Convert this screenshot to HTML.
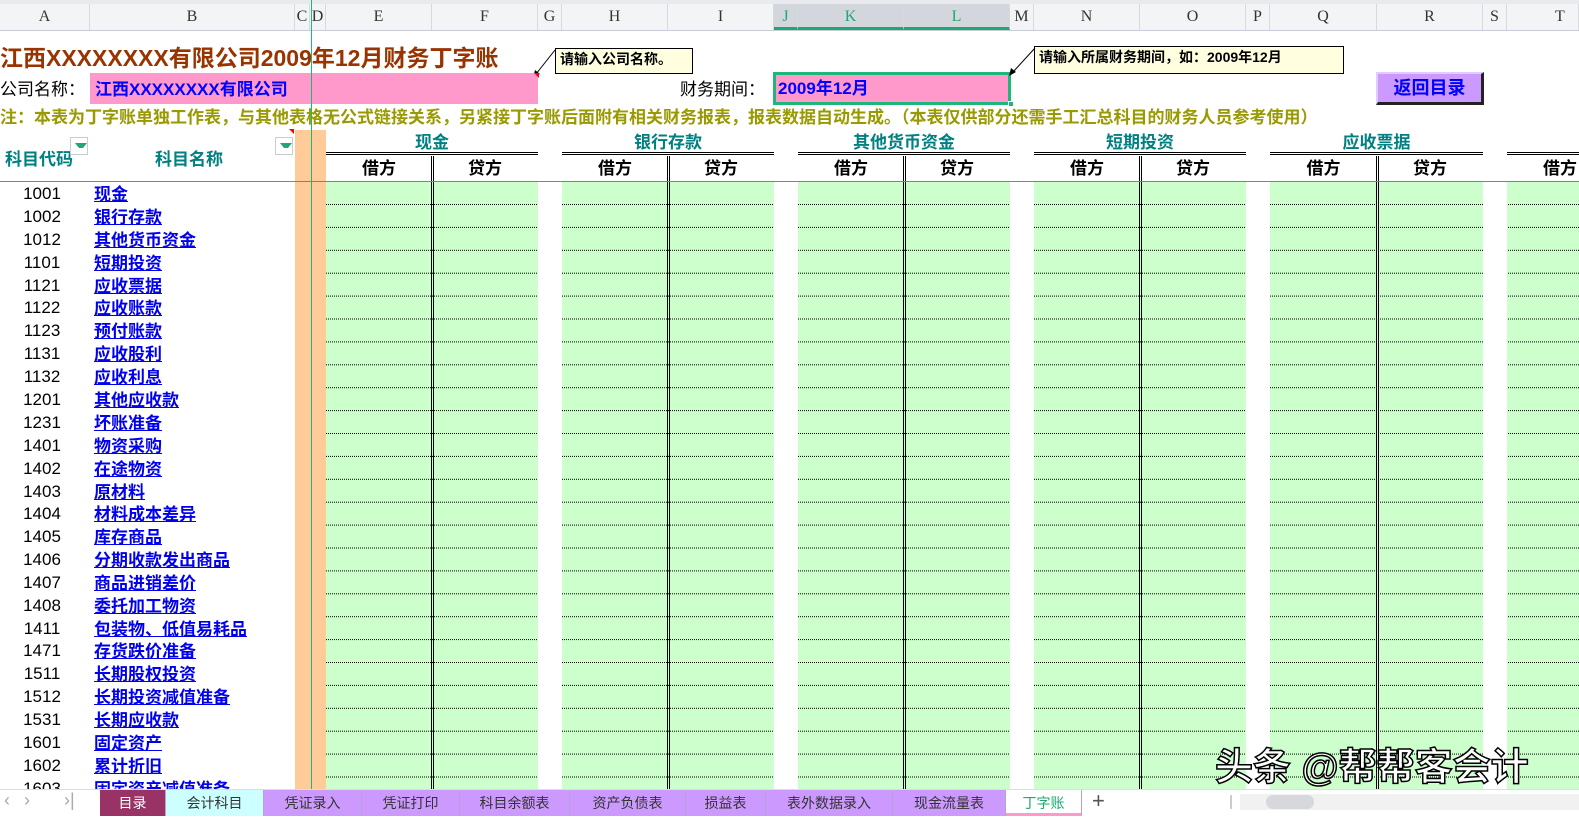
<!DOCTYPE html>
<html><head><meta charset="utf-8">
<style>
*{margin:0;padding:0;box-sizing:border-box}
body{width:1579px;height:821px;overflow:hidden;background:#fff;position:relative;font-family:"Liberation Sans","Noto Sans CJK SC",sans-serif}
.a{position:absolute}
.hdr{top:0;left:0;width:1579px;height:31px;background:#f3f4f6;border-bottom:1px solid #c8ccd4;border-top:4px solid #e8eaee}
.col{position:absolute;top:4px;height:26px;line-height:26px;text-align:center;font-family:"Liberation Serif",serif;font-size:16px;color:#333;border-right:1px solid #d6d9de}
.g{background:#ccffcc}
.zh{font-family:"Liberation Sans","Noto Sans CJK SC",sans-serif;font-weight:bold}
.grp{position:absolute;top:132px;height:23px;line-height:22px;text-align:center;color:#008080;font-size:17px;border-bottom:3px double #000}
.sub{position:absolute;top:157px;height:24px;line-height:24px;text-align:center;font-size:17px;color:#000}
.rows div{position:absolute;height:23px;line-height:23px;font-size:17px}
.code{left:0;width:84px;text-align:center;color:#000}
.nm{left:94px;color:#0000ee;text-decoration:underline;font-weight:bold}
.tab{position:absolute;top:790px;height:26px;line-height:26px;text-align:center;font-size:14px;color:#333;background:#cc99ff;border-right:1px solid #b9a0d8}
</style></head><body>
<div class="a hdr"></div>
<div class="col" style="left:0;width:90px">A</div>
<div class="col" style="left:90px;width:205px">B</div>
<div class="col" style="left:295px;width:15px">C</div>
<div class="col" style="left:310px;width:16px">D</div>
<div class="col" style="left:326px;width:106px">E</div>
<div class="col" style="left:432px;width:106px">F</div>
<div class="col" style="left:538px;width:24px">G</div>
<div class="col" style="left:562px;width:106px">H</div>
<div class="col" style="left:668px;width:106px">I</div>
<div class="col" style="left:774px;width:24px;background:#d3d6dc;color:#1fa872;border-bottom:3px solid #1fa872">J</div>
<div class="col" style="left:798px;width:106px;background:#d3d6dc;color:#1fa872;border-bottom:3px solid #1fa872">K</div>
<div class="col" style="left:904px;width:106px;background:#d3d6dc;color:#1fa872;border-bottom:3px solid #1fa872">L</div>
<div class="col" style="left:1010px;width:24px">M</div>
<div class="col" style="left:1034px;width:106px">N</div>
<div class="col" style="left:1140px;width:106px">O</div>
<div class="col" style="left:1246px;width:24px">P</div>
<div class="col" style="left:1270px;width:107px">Q</div>
<div class="col" style="left:1377px;width:106px">R</div>
<div class="col" style="left:1483px;width:24px">S</div>
<div class="col" style="left:1507px;width:72px;text-align:left;padding-left:48px">T</div>

<div class="a zh" style="left:0;top:39px;font-size:23px;color:#993300;white-space:nowrap">江西XXXXXXXX有限公司2009年12月财务丁字账</div>
<div class="a zh" style="left:555px;top:48px;width:138px;height:26px;background:#ffffe0;border:1px solid #000;font-size:14px;line-height:20px;padding-left:4px">请输入公司名称。</div>
<svg class="a" style="left:530px;top:48px" width="30" height="32"><line x1="25" y1="2" x2="6" y2="26" stroke="#000"/><polygon points="3,30 5,22 10,26" fill="#000"/></svg>

<div class="a" style="left:0;top:78px;font-size:17px;line-height:24px">公司名称：</div>
<div class="a zh" style="left:90px;top:73px;width:448px;height:31px;background:#ff99cc;color:#0000ff;font-size:17px;line-height:33px;padding-left:5px">江西XXXXXXXX有限公司</div>
<div class="a" style="left:534px;top:73px;width:0;height:0;border-left:5px solid transparent;border-top:5px solid red"></div>
<div class="a" style="left:680px;top:78px;font-size:17px;line-height:24px">财务期间：</div>
<div class="a zh" style="left:773px;top:72px;width:238px;height:33px;background:#ff99cc;border:3px solid #1fb67a;color:#0000ff;font-size:17px;line-height:28px;padding-left:2px">2009年12月</div>
<div class="a" style="left:1008px;top:101px;width:6px;height:6px;background:#1fb67a;border:1px solid #fff"></div>
<div class="a zh" style="left:1034px;top:46px;width:310px;height:28px;background:#ffffe0;border:1px solid #000;font-size:14px;line-height:20px;padding-left:4px">请输入所属财务期间，如：2009年12月</div>
<svg class="a" style="left:1005px;top:46px" width="32" height="32"><line x1="30" y1="2" x2="8" y2="26" stroke="#000"/><polygon points="4,30 6,22 11,26" fill="#000"/></svg>
<div class="a zh" style="left:1376px;top:72px;width:108px;height:33px;background:#cc99ff;border-top:2px solid #e0ccff;border-left:2px solid #e0ccff;border-right:3px solid #222;border-bottom:3px solid #222;color:#0000ff;font-size:18px;text-align:center;line-height:29px">返回目录</div>

<div class="a zh" style="left:0;top:106px;font-size:17px;color:#999900;white-space:nowrap;line-height:24px">注：本表为丁字账单独工作表，与其他表格无公式链接关系，另紧接丁字账后面附有相关财务报表，报表数据自动生成。（本表仅供部分还需手工汇总科目的财务人员参考使用）</div>

<div class="a zh" style="left:5px;top:145px;font-size:17px;color:#008080">科目代码</div>
<div class="a zh" style="left:155px;top:145px;font-size:17px;color:#008080">科目名称</div>
<div class="a" style="left:70px;top:137px;width:18px;height:18px;border:1px solid #ccc;background:#fff"><div style="margin:5px 0 0 4px;border-left:4px solid transparent;border-right:4px solid transparent;border-top:5px solid #1fa872"></div></div>
<div class="a" style="left:275px;top:137px;width:18px;height:18px;border:1px solid #ccc;background:#fff"><div style="margin:5px 0 0 4px;border-left:4px solid transparent;border-right:4px solid transparent;border-top:5px solid #1fa872"></div></div>
<div class="a" style="left:289px;top:129px;border-left:5px solid transparent;border-top:5px solid red"></div>

<div class="a" style="left:295px;top:130px;width:31px;height:660px;background:#ffcc99"></div>

<div class="grp zh" style="left:326px;width:212px">现金</div>
<div class="grp zh" style="left:562px;width:212px">银行存款</div>
<div class="grp zh" style="left:798px;width:212px">其他货币资金</div>
<div class="grp zh" style="left:1034px;width:212px">短期投资</div>
<div class="grp zh" style="left:1270px;width:213px">应收票据</div>
<div class="grp zh" style="left:1507px;width:80px"></div>

<div class="sub zh" style="left:326px;width:106px">借方</div><div class="sub zh" style="left:432px;width:106px">贷方</div>
<div class="sub zh" style="left:562px;width:106px">借方</div><div class="sub zh" style="left:668px;width:106px">贷方</div>
<div class="sub zh" style="left:798px;width:106px">借方</div><div class="sub zh" style="left:904px;width:106px">贷方</div>
<div class="sub zh" style="left:1034px;width:106px">借方</div><div class="sub zh" style="left:1140px;width:106px">贷方</div>
<div class="sub zh" style="left:1270px;width:107px">借方</div><div class="sub zh" style="left:1377px;width:106px">贷方</div>
<div class="sub zh" style="left:1507px;width:106px;text-align:left;padding-left:36px">借方</div>

<div class="a g" style="left:326px;top:182px;width:212px;height:608px"></div>
<div class="a g" style="left:562px;top:182px;width:212px;height:608px"></div>
<div class="a g" style="left:798px;top:182px;width:212px;height:608px"></div>
<div class="a g" style="left:1034px;top:182px;width:212px;height:608px"></div>
<div class="a g" style="left:1270px;top:182px;width:213px;height:608px"></div>
<div class="a g" style="left:1507px;top:182px;width:72px;height:608px"></div>
<svg class="a" style="left:0;top:0" width="1579" height="790">
<defs><pattern id="p" x="0" y="204" width="1579" height="22.9" patternUnits="userSpaceOnUse"><line x1="0" y1="0.5" x2="1579" y2="0.5" stroke="#000" stroke-dasharray="1,1"/></pattern></defs>
<rect x="326" y="200" width="212" height="590" fill="url(#p)"/>
<rect x="562" y="200" width="212" height="590" fill="url(#p)"/>
<rect x="798" y="200" width="212" height="590" fill="url(#p)"/>
<rect x="1034" y="200" width="212" height="590" fill="url(#p)"/>
<rect x="1270" y="200" width="213" height="590" fill="url(#p)"/>
<rect x="1507" y="200" width="72" height="590" fill="url(#p)"/>
<g stroke="#000" stroke-width="1">
<line x1="431.5" y1="156" x2="431.5" y2="790"/><line x1="433.5" y1="156" x2="433.5" y2="790"/>
<line x1="667.5" y1="156" x2="667.5" y2="790"/><line x1="669.5" y1="156" x2="669.5" y2="790"/>
<line x1="903.5" y1="156" x2="903.5" y2="790"/><line x1="905.5" y1="156" x2="905.5" y2="790"/>
<line x1="1139.5" y1="156" x2="1139.5" y2="790"/><line x1="1141.5" y1="156" x2="1141.5" y2="790"/>
<line x1="1376.5" y1="156" x2="1376.5" y2="790"/><line x1="1378.5" y1="156" x2="1378.5" y2="790"/>
</g>
<line x1="0" y1="181.5" x2="1579" y2="181.5" stroke="#1fb67a"/>
<line x1="311.5" y1="0" x2="311.5" y2="790" stroke="#1fb67a"/>
</svg>

<div class="rows">
<div class="code" style="top:182px">1001</div><div class="nm zh" style="top:183px">现金</div>
<div class="code" style="top:205px">1002</div><div class="nm zh" style="top:206px">银行存款</div>
<div class="code" style="top:228px">1012</div><div class="nm zh" style="top:229px">其他货币资金</div>
<div class="code" style="top:251px">1101</div><div class="nm zh" style="top:252px">短期投资</div>
<div class="code" style="top:274px">1121</div><div class="nm zh" style="top:275px">应收票据</div>
<div class="code" style="top:296px">1122</div><div class="nm zh" style="top:297px">应收账款</div>
<div class="code" style="top:319px">1123</div><div class="nm zh" style="top:320px">预付账款</div>
<div class="code" style="top:342px">1131</div><div class="nm zh" style="top:343px">应收股利</div>
<div class="code" style="top:365px">1132</div><div class="nm zh" style="top:366px">应收利息</div>
<div class="code" style="top:388px">1201</div><div class="nm zh" style="top:389px">其他应收款</div>
<div class="code" style="top:411px">1231</div><div class="nm zh" style="top:412px">坏账准备</div>
<div class="code" style="top:434px">1401</div><div class="nm zh" style="top:435px">物资采购</div>
<div class="code" style="top:457px">1402</div><div class="nm zh" style="top:458px">在途物资</div>
<div class="code" style="top:480px">1403</div><div class="nm zh" style="top:481px">原材料</div>
<div class="code" style="top:502px">1404</div><div class="nm zh" style="top:503px">材料成本差异</div>
<div class="code" style="top:525px">1405</div><div class="nm zh" style="top:526px">库存商品</div>
<div class="code" style="top:548px">1406</div><div class="nm zh" style="top:549px">分期收款发出商品</div>
<div class="code" style="top:571px">1407</div><div class="nm zh" style="top:572px">商品进销差价</div>
<div class="code" style="top:594px">1408</div><div class="nm zh" style="top:595px">委托加工物资</div>
<div class="code" style="top:617px">1411</div><div class="nm zh" style="top:618px">包装物、低值易耗品</div>
<div class="code" style="top:639px">1471</div><div class="nm zh" style="top:640px">存货跌价准备</div>
<div class="code" style="top:662px">1511</div><div class="nm zh" style="top:663px">长期股权投资</div>
<div class="code" style="top:685px">1512</div><div class="nm zh" style="top:686px">长期投资减值准备</div>
<div class="code" style="top:708px">1531</div><div class="nm zh" style="top:709px">长期应收款</div>
<div class="code" style="top:731px">1601</div><div class="nm zh" style="top:732px">固定资产</div>
<div class="code" style="top:754px">1602</div><div class="nm zh" style="top:755px">累计折旧</div>
<div class="code" style="top:777px">1603</div><div class="nm zh" style="top:778px">固定资产减值准备</div>
</div>

<div class="a" style="left:0;top:789px;width:1579px;height:32px;background:#fff;border-top:1px solid #ddd"></div>
<div class="a" style="left:4px;top:790px;font-size:18px;color:#aaa;letter-spacing:14px">‹›</div>
<div class="a" style="left:64px;top:790px;font-size:18px;color:#aaa">›|</div>
<div class="tab" style="left:100px;width:66px;background:#993366;color:#fff">目录</div>
<div class="tab" style="left:166px;width:98px;background:#ccffff">会计科目</div>
<div class="tab" style="left:264px;width:98px">凭证录入</div>
<div class="tab" style="left:362px;width:98px">凭证打印</div>
<div class="tab" style="left:460px;width:110px">科目余额表</div>
<div class="tab" style="left:570px;width:116px">资产负债表</div>
<div class="tab" style="left:686px;width:80px">损益表</div>
<div class="tab" style="left:766px;width:127px">表外数据录入</div>
<div class="tab" style="left:893px;width:113px">现金流量表</div>
<div class="tab" style="left:1006px;width:76px;background:#fff;color:#1fa872;border-bottom:3px solid #ff99cc">丁字账</div>
<div class="a" style="left:1092px;top:788px;font-size:22px;color:#555">+</div>
<div class="a" style="left:1230px;top:795px;width:2px;height:14px;background:#ccc"></div>
<div class="a" style="left:1240px;top:794px;width:339px;height:16px;background:#f1f1f1"></div>
<div class="a" style="left:1266px;top:795px;width:48px;height:14px;background:#d6d8dc;border-radius:7px"></div>

<div class="a" style="left:1215px;top:743px;font-size:38px;line-height:50px;color:#fff;font-weight:bold;white-space:nowrap;-webkit-text-stroke:1.5px #000;font-family:'Liberation Sans','Noto Sans CJK SC',sans-serif">头条 @帮帮客会计</div>
</body></html>
